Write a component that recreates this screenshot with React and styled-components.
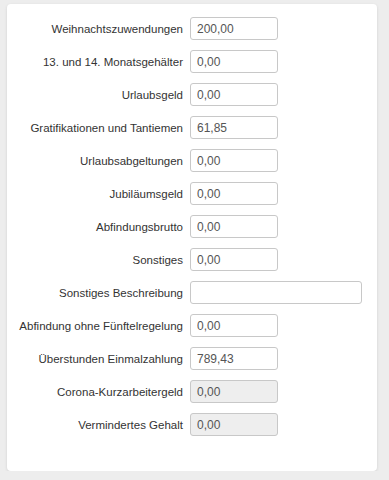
import React from "react";
import styled, { createGlobalStyle } from "styled-components";

const Global = createGlobalStyle`
  html, body { margin: 0; padding: 0; background: #ededed; }
  body { font-family: "Liberation Sans", Arial, sans-serif; }
`;

const Card = styled.div`
  box-sizing: border-box;
  width: 370px;
  height: 467px;
  margin: 4px 0 0 7px;
  background: #fff;
  border-radius: 4px;
  box-shadow: 0 1px 3px rgba(0,0,0,0.12);
  padding: 13px 0 0 0;
  display: grid;
  grid-template-columns: 176px auto;
  column-gap: 7px;
  row-gap: 10px;
  align-content: start;
  align-items: center;
`;

const Label = styled.label`
  text-align: right;
  font-size: 11.5px;
  color: #333;
  white-space: nowrap;
`;

const Input = styled.input`
  box-sizing: border-box;
  width: ${p => (p.$wide ? "172px" : "88px")};
  height: 23px;
  padding: 0 6px;
  border: 1px solid #c8c8c8;
  border-radius: 3px;
  font-family: "Liberation Sans", Arial, sans-serif;
  font-size: 12px;
  color: #555;
  background: ${p => (p.disabled ? "#eeeeee" : "#fff")};
  outline: none;
  display: block;
`;

const rows = [
  ["Weihnachtszuwendungen", "200,00"],
  ["13. und 14. Monatsgehälter", "0,00"],
  ["Urlaubsgeld", "0,00"],
  ["Gratifikationen und Tantiemen", "61,85"],
  ["Urlaubsabgeltungen", "0,00"],
  ["Jubiläumsgeld", "0,00"],
  ["Abfindungsbrutto", "0,00"],
  ["Sonstiges", "0,00"],
  ["Sonstiges Beschreibung", "", { wide: true }],
  ["Abfindung ohne Fünftelregelung", "0,00"],
  ["Überstunden Einmalzahlung", "789,43"],
  ["Corona-Kurzarbeitergeld", "0,00", { disabled: true }],
  ["Vermindertes Gehalt", "0,00", { disabled: true }],
];

export default function App() {
  return (
    <>
      <Global />
      <Card>
        {rows.map(([label, value, opts = {}], i) => (
          <React.Fragment key={i}>
            <Label htmlFor={`f${i}`}>{label}</Label>
            <div>
              <Input
                id={`f${i}`}
                defaultValue={value}
                $wide={opts.wide}
                disabled={opts.disabled}
              />
            </div>
          </React.Fragment>
        ))}
      </Card>
    </>
  );
}
